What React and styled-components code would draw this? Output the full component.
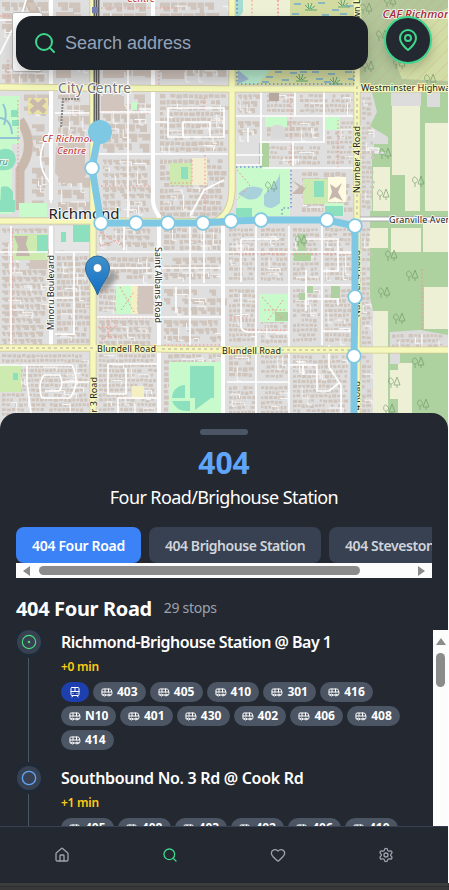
import React from "react";
import styled, { createGlobalStyle, css } from "styled-components";
import { Search, Bus, TramFront, House, Heart, Settings, CircleDot, Circle } from "lucide-react";

const Global = createGlobalStyle`
  *{box-sizing:border-box}
  html,body{margin:0;background:#fff;overflow:hidden}
  body{font-family:"Noto Sans","Open Sans",sans-serif;color:#fff}
  button{font:inherit;border:0;padding:0;cursor:pointer}
`;

const Page = styled.div`
  width:449px;height:890px;overflow:hidden;
  background:linear-gradient(#3c3c3c 0 886px,#2c2c2c 886px 887px,#383838 887px);
`;
const Screen = styled.main`
  position:relative;width:448px;height:883px;display:flex;flex-direction:column;
  background:#242830;box-shadow:1px 0 0 #fff;
`;
const MapArea = styled.section`
  height:413px;flex:none;
  svg.map{display:block;width:448px;height:430px}
`;
const ZoomControl = styled.div`
  position:absolute;left:12px;top:12px;width:31px;height:60px;
  background:#fff;border:1px solid #bcb8b5;border-radius:3px;
`;
const Overlay = styled.div`
  position:absolute;left:16px;top:16px;right:16px;
  display:flex;justify-content:space-between;align-items:flex-start;
`;
const SearchBox = styled.label`
  width:352px;height:54px;padding:0 17px;display:flex;align-items:center;gap:8px;
  background:#1d2128;border-radius:16px;box-shadow:0 8px 16px rgba(0,0,0,.22);
  svg{flex:none}
`;
const SearchInput = styled.input`
  flex:1;min-width:0;border:0;outline:0;padding:0;background:transparent;color:#fff;
  font:18px "Liberation Sans",Arial,sans-serif;
  &::placeholder{color:#94a3b8;opacity:1}
`;
const LocateButton = styled.button`
  width:48px;height:48px;border-radius:50%;display:grid;place-items:center;
  background:#242830;color:#3dd68c;border:2px solid #3dd68c;box-shadow:0 6px 12px rgba(0,0,0,.18);
`;
const Sheet = styled.section`
  position:relative;flex:1;min-height:0;display:flex;flex-direction:column;
  background:#242830;border-radius:16px 16px 0 0;padding-top:16px;
`;
const Handle = styled.div`
  width:48px;height:6px;border-radius:3px;background:#4b5563;margin:0 auto;flex:none;
`;
const RouteNumber = styled.h1`
  margin:10px 0 0;height:36px;font-size:30px;line-height:36px;font-weight:700;text-align:center;color:#60a5fa;
`;
const RouteName = styled.p`
  margin:3px 0 0;height:28px;line-height:26px;font-size:18px;text-align:center;letter-spacing:-.6px;
`;
const TabStrip = styled.div`
  margin:15px 16px 0;height:36px;display:flex;gap:8px;overflow:hidden;flex:none;
`;
const Tab = styled.button`
  flex:none;width:${p => p.$width}px;height:36px;border-radius:8px;
  font-size:14px;font-weight:600;letter-spacing:${p => p.$tracking}px;white-space:nowrap;
  text-align:left;padding-left:16px;
  background:${p => p.$active ? "#3b82f6" : "#374151"};
  color:${p => p.$active ? "#fff" : "#d1d5db"};
`;
const HScroll = styled.div`
  height:15px;margin:0 16px;background:#fcfcfc;display:flex;align-items:center;padding:0 7px;flex:none;
`;
const Arrow = styled.i`
  width:0;height:0;flex:none;
  ${p => p.$dir === "left" && css`border:5px solid transparent;border-left:0;border-right:7px solid #8b8b8b;`}
  ${p => p.$dir === "right" && css`border:5px solid transparent;border-right:0;border-left:7px solid #8b8b8b;margin-left:auto;`}
  ${p => p.$dir === "up" && css`border:5px solid transparent;border-top:0;border-bottom:7px solid #8b8b8b;`}
`;
const HThumb = styled.div`
  width:321px;height:9px;border-radius:5px;background:#8b8b8b;margin-left:9px;
`;
const RouteHeading = styled.div`
  margin:16px 16px 0;height:30px;display:flex;gap:12px;line-height:30px;flex:none;
`;
const HeadingText = styled.h2`
  margin:0;font-size:20px;font-weight:700;letter-spacing:-.35px;white-space:nowrap;
`;
const StopCount = styled.span`
  font-size:14px;line-height:28px;color:#9ca3af;letter-spacing:-.3px;
`;
const ListArea = styled.div`
  display:flex;margin-top:6px;height:196px;overflow:hidden;
`;
const Stops = styled.ol`
  list-style:none;margin:0;padding:0 0 0 17px;flex:1;
`;
const Stop = styled.li`
  display:flex;gap:20px;height:136px;
`;
const Track = styled.div`
  width:24px;display:flex;flex-direction:column;align-items:center;flex:none;
`;
const Marker = styled.span`
  width:24px;height:24px;border-radius:50%;display:grid;place-items:center;flex:none;
  color:${p => p.$color};background:#374151;box-shadow:0 0 0 3px #202a37;
`;
const Connector = styled.i`
  width:1px;height:104px;margin-top:4px;margin-right:1px;background:#4b5563;
`;
const StopBody = styled.div`flex:1;min-width:0;`;
const StopName = styled.h3`
  margin:0;height:24px;line-height:24px;font-size:16px;font-weight:600;letter-spacing:${p => p.$tracking}px;white-space:nowrap;
`;
const Delay = styled.div`
  margin-top:4px;height:18px;line-height:18px;font-size:12px;font-weight:600;color:#facc15;letter-spacing:-.25px;
`;
const Chips = styled.div`
  display:flex;flex-wrap:wrap;gap:4px;width:350px;margin-top:6px;
`;
const Chip = styled.span`
  height:20px;width:${p => p.$train ? 28 : p.$wide ? 55 : 52.8}px;border-radius:10px;
  display:flex;align-items:center;gap:4px;padding-left:8px;flex:none;
  background:${p => p.$train ? "#1e40af" : "#4b5563"};
  font-size:12px;font-weight:700;line-height:20px;
  svg{flex:none}
`;
const VScroll = styled.div`
  width:15px;background:#fcfcfc;display:flex;flex-direction:column;align-items:center;padding-top:8px;flex:none;
`;
const VThumb = styled.div`
  width:9px;height:34px;border-radius:5px;background:#8b8b8b;margin-top:8px;
`;
const Nav = styled.nav`
  height:57px;flex:none;border-top:1px solid #374151;background:#242830;
  display:grid;grid-template-columns:repeat(4,108px);padding:0 8px;
`;
const NavItem = styled.button`
  display:grid;place-items:center;background:transparent;
  color:${p => p.$active ? "#3dd68c" : "#9ca3af"};
`;

const PinIcon = () => (
  <svg width="24" height="24" viewBox="0 0 24 24" fill="none" stroke="currentColor" strokeWidth="2" strokeLinecap="round" strokeLinejoin="round">
    <path d="M20 10c0 6-8 12-8 12s-8-6-8-12a8 8 0 0 1 16 0Z" />
    <circle cx="12" cy="10" r="3" />
  </svg>
);

const seeded = seed => () => {
  seed = (seed * 1664525 + 1013904223) % 4294967296;
  return seed / 4294967296;
};

// Rows of building footprints inside a city block.
function footprints([x, y, w, h, size], seed) {
  const rnd = seeded(seed * 7919 + 13);
  let d = "";
  for (let j = y + 2; j < y + h - size; j += size + 1.9) {
    let i = x + 2;
    while (i < x + w - size) {
      const bw = size * (0.7 + rnd() * 0.8);
      const bh = size * (0.8 + rnd() * 0.35);
      const notch = size > 4 ? bw * 0.35 : 0;
      if (rnd() > 0.08) {
        d += `M${i.toFixed(1)} ${(j + rnd() * 0.7).toFixed(1)}h${bw.toFixed(1)}v${bh.toFixed(1)}h-${(bw - notch).toFixed(1)}`;
        d += notch ? `v-${(bh * 0.45).toFixed(1)}h-${notch.toFixed(1)}z` : "z";
      }
      i += bw + 1.1;
    }
  }
  return d;
}

// Short service lanes that branch off the streets of a block.
function lanes([x, y, w, h], seed) {
  const rnd = seeded(seed * 4801 + 7);
  let d = "";
  const count = Math.round((w * h) / 330);
  for (let k = 0; k < count; k++) {
    const lx = x + 3 + rnd() * (w - 8);
    const ly = y + 3 + rnd() * (h - 8);
    const len = 5 + rnd() * 10;
    d += rnd() > 0.5
      ? `M${lx.toFixed(1)} ${ly.toFixed(1)}H${Math.min(lx + len, x + w).toFixed(1)}v4`
      : `M${lx.toFixed(1)} ${ly.toFixed(1)}V${Math.min(ly + len, y + h).toFixed(1)}h4`;
  }
  return d;
}

const blocks = [
  [0, 0, 48, 38, 9], [0, 62, 48, 22, 8], [56, 0, 34, 82, 10], [101, 0, 50, 82, 9], [158, 0, 70, 82, 9],
  [22, 92, 28, 26, 10], [56, 92, 34, 45, 9], [101, 92, 50, 60, 8], [158, 92, 70, 62, 4],
  [30, 122, 22, 88, 9], [56, 140, 34, 74, 10], [101, 157, 50, 58, 5], [158, 157, 67, 60, 4],
  [0, 226, 48, 118, 5], [55, 226, 36, 26, 6], [55, 254, 36, 90, 4],
  [97, 226, 58, 26, 5], [97, 255, 58, 28, 4], [97, 287, 58, 28, 4], [97, 318, 58, 28, 5],
  [162, 226, 62, 26, 4], [162, 255, 62, 28, 6], [162, 287, 62, 28, 7], [162, 318, 62, 28, 6],
  [0, 352, 90, 64, 3], [97, 352, 60, 64, 3], [162, 352, 62, 64, 4],
  [236, 92, 25, 24, 5], [265, 92, 30, 24, 3], [298, 92, 56, 24, 3],
  [236, 119, 25, 22, 6], [265, 119, 57, 22, 4], [325, 119, 30, 46, 3],
  [265, 144, 56, 22, 3], [300, 170, 52, 44, 4],
  [227, 226, 29, 58, 3], [259, 226, 29, 58, 3], [291, 226, 29, 58, 3], [323, 226, 29, 58, 3],
  [227, 287, 29, 58, 3], [259, 318, 29, 27, 3], [291, 287, 29, 58, 3], [323, 287, 29, 58, 3],
  [227, 353, 29, 28, 4], [227, 384, 29, 32, 3], [259, 353, 29, 28, 3], [259, 384, 29, 32, 3],
  [291, 353, 58, 63, 3], [360, 95, 14, 116, 3], [360, 226, 11, 118, 3], [360, 353, 12, 60, 3], [390, 332, 55, 15, 3],
];

const fields = [
  [392, 105, 28, 70, "#eef0d5"], [425, 123, 24, 88, "#eef0d5"], [373, 167, 17, 44, "#eef0d5"], [405, 175, 15, 36, "#eef0d5"],
  [368, 228, 20, 20, "#eef0d5"], [391, 228, 30, 24, "#eef0d5"], [423, 222, 26, 30, "#eef0d5"],
  [424, 287, 25, 42, "#eef0d5"], [373, 311, 15, 102, "#eef0d5"], [390, 370, 8, 29, "#eef0d5"], [398, 363, 14, 50, "#eef0d5"],
];
const parks = [
  [0, 96, 20, 48, "#c8facc"], [0, 144, 12, 70, "#c8facc"], [170, 163, 22, 22, "#cdebb0"], [192, 158, 15, 27, "#f3eed2"],
  [265, 117, 22, 10, "#c8facc"], [325, 117, 15, 13, "#c8facc"], [259, 143, 10, 24, "#aed1a0"],
  [237, 167, 53, 49, "#c8facc"], [303, 179, 25, 25, "#cdebb0"], [328, 177, 18, 25, "#fffbe0"], [325, 203, 19, 13, "#c8facc"],
  [0, 200, 15, 12, "#8de0bd"], [19, 203, 28, 14, "#c8facc"], [55, 226, 36, 24, "#e5e5e5"], [73, 225, 17, 17, "#8de0bd"], [61, 232, 5, 10, "#8de0bd"],
  [13, 234, 35, 26, "#cdebb0"], [37, 235, 11, 18, "#8de0bd"],
  [116, 285, 21, 29, "#c8facc"], [131, 285, 6, 29, "#f5efc4"], [259, 294, 29, 28, "#c8facc"],
  [275, 312, 13, 9, "#aed1a0"], [298, 234, 8, 27, "#aed1a0"], [294, 251, 17, 10, "#aed1a0"],
  [299, 293, 7, 7, "#aed1a0"], [331, 286, 9, 12, "#aed1a0"], [307, 286, 6, 7, "#aed1a0"],
  [169, 362, 55, 55, "#c8facc"], [190, 366, 24, 32, "#8de0bd"], [0, 365, 21, 27, "#cdebb0"], [13, 373, 5, 7, "#8de0bd"],
  [132, 386, 12, 13, "#f5efc4"], [131, 102, 6, 8, "#c8facc"], [181, 167, 7, 12, "#8de0bd"],
  [314, 181, 10, 16, "#8de0bd"], [325, 206, 18, 10, "#8de0bd"], [236, 208, 16, 9, "#8de0bd"],
];
const streets = [
  "M51 0V200 M51 226V345", "M153 0V200Q153 208 159 216V413", "M223 226V413",
];
const minorStreets = [
  "M0 20H20L26 0 M0 54L12 30 M55 113H92 M51 130Q30 160 51 184V203 M99 36H228 M99 112H153 M99 154H228 M128 70V220 M153 122H168 M168 108H224V137H168Z M183 122H210V137H183Z M190 216L204 190L224 180",
  "M0 252H48 M55 252H355 M97 285H355 M97 317H223 M11 226V345 M74 252V334H55 M55 298H74 M97 268H150 M124 226V250 M162 268H222 M190 226V345 M176 287V313 M204 226V283 M0 365H72Q81 382 70 398H42Q37 385 44 375H60Q64 386 59 391H45 M27 365V382L31 413 M62 382H92 M108 364H158 M108 364V394H126V368 M118 413V398H158",
  "M236 116H355 M261 92V165H236 M295 92V116 M324 92V142H261 M236 155H263 M263 168H355 M293 142V166 M248 128V142 M256 226V413 M289 226V413 M322 226V345",
  "M241 239H279 M241 239V282 M305 239H338V271H322 M338 253H352 M241 293V327Q242 332 250 332H289 M306 270V311 M306 299H338V305 M322 331H352 M227 382H289 M289 365H317V391H329L340 382 M329 345V367L341 385V413 M303 365V375",
];
const dashed = "M128 92V216 M92 37V82 M100 112L150 113 M12 228V345 M99 318H155 M108 316V337H119 M159 315V413 M205 155V216 M237 254H355 M224 345H160 M291 166V90 M338 168V120 M422 269V330 M18 100V200 M237 170L250 185L237 200 M278 0V18 M230 318L250 318 M241 330H290 M0 16H45 M101 8H180 M159 36V88 M262 297L282 319M268 320L284 299 M264 310H285 M120 287L134 312M121 310L134 292 M98 327H118M102 340L117 325 M101 186H150 M8 60V86 M60 20H88 M100 232L120 245L118 240L100 246 M204 98V110 M192 160V183H170";

const stopsOnMap = [[92, 168], [101, 223], [136, 223], [168, 223], [203, 223], [231, 221], [261, 220], [327, 220], [355, 226], [355, 297], [354, 356]];
const trees = [[366, 10], [390, 3], [382, 37], [368, 68], [399, 65], [430, 81], [385, 155], [418, 183], [383, 196], [391, 257], [412, 277], [384, 294], [399, 320], [418, 364], [394, 384], [423, 406], [389, 411], [271, 188], [301, 242]];

const Label = styled.text`
  font-family:"Noto Sans",sans-serif;font-size:${p => p.$size || 9}px;
  fill:${p => p.$color || "#222"};stroke:${p => p.$halo || "rgba(255,255,255,.75)"};stroke-width:2px;paint-order:stroke;
  font-style:${p => p.$italic ? "italic" : "normal"};
  font-weight:${p => p.$weight || 400};
`;

function StreetMap() {
  return (
    <svg className="map" viewBox="0 0 448 430">
      <defs>
        <linearGradient id="pin" x1="0" y1="0" x2="0" y2="1"><stop stopColor="#4090ca" /><stop offset="1" stopColor="#126fc6" /></linearGradient>
        <pattern id="hatch" width="9" height="9" patternUnits="userSpaceOnUse" patternTransform="rotate(45)"><path d="M0 0V9" stroke="#d59a84" strokeWidth=".8" opacity=".65" /></pattern>
        <filter id="soft"><feGaussianBlur stdDeviation="2" /></filter>
      </defs>
      <rect width="448" height="430" fill="#dfdfdf" />
      <rect x="370" y="91" width="78" height="340" fill="#aed1a0" />
      <rect x="357" width="91" height="85" fill="#b2c69a" />
      <path d="M401 28L448 8V81L402 79Q392 60 401 28" fill="#d1dda5" />
      <rect x="357" width="91" height="85" fill="url(#hatch)" />
      <rect x="236" width="120" height="85" fill="#d4dba0" />
      <path d="M243 0H290V18Q278 65 255 84H237V0Z" fill="#eef0d5" />
      <path d="M252 0V16M278 0V16" stroke="#f4938a" strokeDasharray="1.7 2.2" />
      <path d="M236 0H243V12L240 16H236Z" fill="#a6dcd2" />
      <path d="M237 68H272L258 84H237Z" fill="#b9eccf" /><path d="M238 70L249 79L238 84Z" fill="#9fb9d1" />
      <g stroke="#589fd7" strokeWidth="1.2">
        {[[294, 4], [318, 3], [332, 10], [346, 6], [292, 14], [322, 15], [340, 14], [275, 72], [290, 73], [312, 72], [328, 74], [345, 72], [266, 77], [282, 80], [316, 79], [348, 79], [300, 72], [262, 82], [324, 82]].map(([x, y], i) => <path key={i} d={`M${x} ${y}h7`} />)}
      </g>
      {[[309, 9], [342, 6], [300, 80], [334, 83]].map(([x, y], i) => <path key={i} d={`M${x} ${y}l-4-4m4 4l-1-6m2 6l2-6m-1 6l4-3m-10 4h12`} stroke="#5ba674" fill="none" />)}
      {fields.map(([x, y, w, h, f], i) => <rect key={i} x={x} y={y} width={w} height={h} fill={f} />)}
      <path d="M360 92H372L377 112L370 126L388 137V144H374V152H386V154H372V211H358V92ZM358 222H370L366 280L373 311V413H358ZM391 92H421V106H391ZM427 92H440V107H427ZM390 332L420 330L448 335V350H400V364H390Z" fill="#dcdcdc" />
      <path d="M368 148H379V152H368Z" fill="#ddd" stroke="#fff" />
      <path d="M28 0L36 14L31 37 M20 120Q37 145 20 170V210" stroke="#c9b9ad" strokeWidth="9" fill="none" />
      <path d={blocks.map(footprints).join("")} fill="#d0c5bc" />
      <path d={blocks.map(lanes).join("")} fill="none" stroke="#f7f7f7" strokeWidth="1" />
      <path d="M56 12H74V30H90V52H71V78H56ZM103 43H124V78H103ZM133 48H150V76H133ZM162 48H184V79H162ZM190 40H220V65H190ZM101 96H124V111H101ZM56 148Q67 138 85 143V182L65 184L55 173ZM138 286H153V314H138ZM30 260H47V269H30ZM170 365H188V383H170Z" fill="#d1c5bd" />
      {parks.map(([x, y, w, h, f], i) => <rect key={i} x={x} y={y} width={w} height={h} fill={f} />)}
      <path d="M269 93H279V101H269Z" fill="#b7a99f" /><path d="M271 127Q277 122 285 128V139H271Z" fill="#d9d9d9" />
      <rect x="28" y="98" width="20" height="16" fill="#e9e2a5" /><path d="M31 100L45 112M45 100L31 112" stroke="#c9b9ad" strokeWidth="5" />
      <path d="M14 236H28L26 244L30 256H16L18 246ZM292 180L305 188L309 182L302 194L292 194L299 187ZM330 184L336 188L342 183L338 192L343 201L335 197L329 200L332 192Z" fill="#c5b7ad" />
      <path d="M0 150Q14 145 16 160Q14 172 0 170ZM1 187Q9 184 13 192V212H0ZM11 110h7v7h-7zM12 120h7v6h-7z" fill="#8de0bd" />
      <path d="M238 194Q249 182 263 189Q260 202 247 199ZM264 195Q279 180 280 173V203Q270 212 264 205Z" fill="#a9d1dc" />
      <path d="M0 118Q11 119 12 134M0 138H20M3 104Q8 112 4 125" fill="none" stroke="#91c5d5" strokeWidth="2" />
      <path d="M172 398A13 13 0 0 1 185 385V398ZM172 401H190V411Q176 412 172 401ZM195 385Q208 388 211 398L195 410Z" fill="#8de0bd" />
      <path d={dashed} fill="none" stroke="#f4938a" strokeWidth="1" strokeDasharray="1.7 2.2" />
      <g fill="none" stroke="#fff" strokeWidth="1.7">{minorStreets.map(d => <path key={d} d={d} />)}</g>
      <g fill="none" stroke="#fff" strokeWidth="4">{streets.map(d => <path key={d} d={d} />)}</g>
      <path d="M357 219H448" stroke="#aaa" strokeWidth="5" /><path d="M357 219H448" stroke="#fff" strokeWidth="3" />
      <path d="M422 334V348" stroke="#fff" strokeWidth="1.2" />
      {[["#ccc795", 7], ["#f5f8ba", 5.5]].map(([c, w]) => <path key={c} d="M0 87L100 88L230 89H448M0 221H100L231 222M93 0V413M232 0V190Q231 214 216 221M357 0V413M0 348H100L220 350H448" stroke={c} strokeWidth={w} fill="none" />)}
      <path d="M0 348H93M162 349H220M281 350H355M357 86V215" stroke="#b3a8a0" strokeWidth="1" strokeDasharray="3 3" fill="none" />
      <path d="M237 0V84H354V68M236 167H262M291 170V208H282V217" stroke="#456cc5" strokeDasharray="1.5 2.5" fill="none" />
      <path d="M96.5 0V132" stroke="#666" strokeWidth="6" /><path d="M96.5 0V132" stroke="#aaa" strokeWidth="3" /><path d="M96.5 0V132" stroke="#555" strokeWidth="1" />
      <rect x="92" y="7" width="6" height="6" fill="#7582b5" />
      <path d="M63 98L61 128M65 99h15" stroke="#888" strokeWidth="2" strokeDasharray="2 1" fill="none" />
      <g stroke="#6d9667" strokeWidth="1" fill="none" opacity=".65">
        {trees.map(([x, y], i) => <path key={i} d={`M${x - 3} ${y + 4}V${y}m0 0c-5-1-1-9 1-5c3 2 1 5-1 5M${x + 3} ${y + 4}v-3m-3 0l3-8l3 8z`} />)}
      </g>
      <Label x="58" y="93" $size={13.6} $color="#777" $halo="#fff" textLength="73">City Centre</Label>
      <Label x="48.500" y="218.5" $size={15} textLength="71">Richmond</Label>
      <Label $italic $size={9.8} $color="#c22f32" x="42" y="142" textLength="59">CF Richmond</Label>
      <Label $italic $size={9.8} $color="#c22f32" x="57" y="153.5" textLength="29">Centre</Label>
      <Label $italic $weight={500} $size={11.5} $color="#a4263c" x="382.500" y="18" textLength="75">CAF Richmond</Label>
      <Label $italic $size={9.8} $color="#c22f32" x="127" y="2" textLength="28">Centre</Label>
      <Label $italic $color="#498b65" x="-1" y="165">ru</Label>
      <Label x="361" y="91" $size={9.2} $halo="#f4f6bd" textLength="94">Westminster Highway</Label>
      <Label x="389" y="223" textLength="73">Granville Avenue</Label>
      <Label x="97" y="352" $halo="#f4f6bd" textLength="59">Blundell Road</Label>
      <Label x="222" y="354" $halo="#f4f6bd" textLength="59">Blundell Road</Label>
      <Label transform="translate(54 330) rotate(-90)" textLength="75">Minoru Boulevard</Label>
      <Label transform="translate(155 247) rotate(90)" textLength="76">Saint Albans Road</Label>
      <Label transform="translate(360 193) rotate(-90)" $halo="#f4f6bd" textLength="67">Number 4 Road</Label>
      <Label transform="translate(360 317) rotate(-90)" $halo="#f4f6bd" textLength="67">Number 4 Road</Label>
      <Label transform="translate(360 448) rotate(-90)" $halo="#f4f6bd" textLength="67">Number 4 Road</Label>
      <Label transform="translate(360 19) rotate(-90)" $halo="#f4f6bd">wn Line</Label>
      <Label transform="translate(97 444) rotate(-90)" $halo="#f4f6bd" textLength="67">Number 3 Road</Label>
      <path d="M99 132L92 168L101 223H203L231 221L261 220H327L355 226V297L354 356V430" fill="none" stroke="#7ec8e3" strokeWidth="7" strokeLinejoin="round" />
      <circle cx="100" cy="132" r="12" fill="#7ec8e3" />
      {stopsOnMap.map(([x, y]) => <circle key={`${x}-${y}`} cx={x} cy={y} r="6.8" fill="#fff" stroke="#7ec8e3" strokeWidth="1.7" />)}
      <path d="M98 294Q116 286 117 273Q110 268 101 278Z" fill="#333" opacity=".4" filter="url(#soft)" />
      <path d="M97.5 295C94 284 85.500 277 85.500 268A12 12 0 0 1 109.500 268C109.500 277 101 284 97.500 295Z" fill="url(#pin)" stroke="#2e6c97" />
      <circle cx="97.500" cy="268" r="4.300" fill="#fff" stroke="#2e6c97" strokeWidth=".6" />
    </svg>
  );
}

const tabs = [["404 Four Road", 125, -0.32], ["404 Brighouse Station", 172, -0.45], ["404 Steveston", 136, -0.42]];
const stops = [
  { name: "Richmond-Brighouse Station @ Bay 1", tracking: -0.51, delay: "+0 min", first: true, train: true, routes: ["403", "405", "410", "301", "416", "N10", "401", "430", "402", "406", "408", "414"] },
  { name: "Southbound No. 3 Rd @ Cook Rd", tracking: -0.31, delay: "+1 min", routes: ["405", "408", "403", "402", "406", "410"] },
];
const navItems = [[House, "Home"], [Search, "Search"], [Heart, "Favourites"], [Settings, "Settings"]];

export default function App() {
  return (
    <>
      <Global />
      <Page>
        <Screen>
          <MapArea><StreetMap /><ZoomControl /></MapArea>
          <Overlay>
            <SearchBox><Search size={24} color="#3dd68c" /><SearchInput placeholder="Search address" /></SearchBox>
            <LocateButton aria-label="My location"><PinIcon /></LocateButton>
          </Overlay>
          <Sheet>
            <Handle />
            <RouteNumber>404</RouteNumber>
            <RouteName>Four Road/Brighouse Station</RouteName>
            <TabStrip>{tabs.map(([name, width, tracking], i) => <Tab key={name} $active={i === 0} $width={width} $tracking={tracking}>{name}</Tab>)}</TabStrip>
            <HScroll><Arrow $dir="left" /><HThumb /><Arrow $dir="right" /></HScroll>
            <RouteHeading><HeadingText>404 Four Road</HeadingText><StopCount>29 stops</StopCount></RouteHeading>
            <ListArea>
              <Stops>
                {stops.map(s => (
                  <Stop key={s.name}>
                    <Track>
                      <Marker $color={s.first ? "#4ade80" : "#60a5fa"}>{s.first ? <CircleDot size={16} strokeWidth={1.7} /> : <Circle size={16} />}</Marker>
                      <Connector />
                    </Track>
                    <StopBody>
                      <StopName $tracking={s.tracking}>{s.name}</StopName>
                      <Delay>{s.delay}</Delay>
                      <Chips>
                        {s.train && <Chip $train><TramFront size={12} /></Chip>}
                        {s.routes.map(r => <Chip key={r} $wide={r === "N10"}><Bus size={12} />{r}</Chip>)}
                      </Chips>
                    </StopBody>
                  </Stop>
                ))}
              </Stops>
              <VScroll><Arrow $dir="up" /><VThumb /></VScroll>
            </ListArea>
          </Sheet>
          <Nav>{navItems.map(([Icon, name]) => <NavItem key={name} aria-label={name} $active={name === "Search"}><Icon size={16} /></NavItem>)}</Nav>
        </Screen>
      </Page>
    </>
  );
}
